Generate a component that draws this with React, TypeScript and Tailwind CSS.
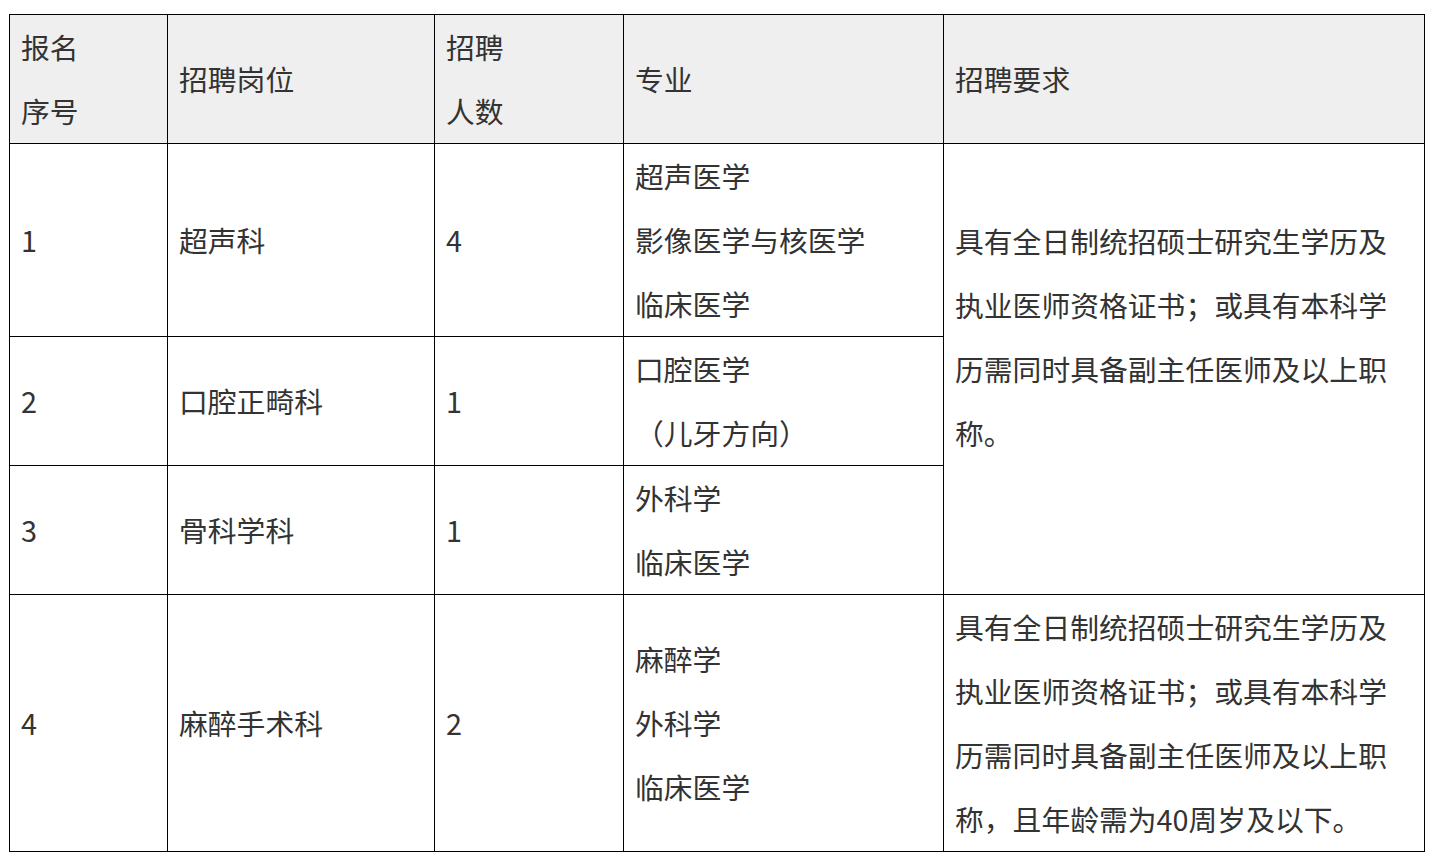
const font = {
  fontFamily: '"Noto Sans CJK SC", "Noto Sans", sans-serif',
};

type Row = {
  no: string;
  post: string;
  count: string;
  majors: string[];
};

const rows: Row[] = [
  { no: '1', post: '超声科', count: '4', majors: ['超声医学', '影像医学与核医学', '临床医学'] },
  { no: '2', post: '口腔正畸科', count: '1', majors: ['口腔医学', '（儿牙方向）'] },
  { no: '3', post: '骨科学科', count: '1', majors: ['外科学', '临床医学'] },
];

const req1 = ['具有全日制统招硕士研究生学历及', '执业医师资格证书；或具有本科学', '历需同时具备副主任医师及以上职', '称。'];
const req2 = ['具有全日制统招硕士研究生学历及', '执业医师资格证书；或具有本科学', '历需同时具备副主任医师及以上职', '称，且年龄需为40周岁及以下。'];

const cell = 'border border-[#000] pl-[11px] pr-3 py-0 align-middle text-left font-normal';

function Lines({ items }: { items: string[] }) {
  return (
    <>
      {items.map((t, i) => (
        <div key={i} className="whitespace-nowrap">
          {t}
        </div>
      ))}
    </>
  );
}

export default function App() {
  return (
    <div className="bg-white w-[1451px] h-[863px] pt-[14px] pl-[9px]" style={font}>
      <table className="table-fixed border-collapse w-[1415px] text-[28.8px] leading-[64px] text-[#333]">
        <colgroup>
          <col className="w-[158px]" />
          <col className="w-[267px]" />
          <col className="w-[189px]" />
          <col className="w-[320px]" />
          <col className="w-[481px]" />
        </colgroup>
        <thead>
          <tr className="bg-[#efefef] h-[129px]">
            <th className={cell}>
              <Lines items={['报名', '序号']} />
            </th>
            <th className={cell}>招聘岗位</th>
            <th className={cell}>
              <Lines items={['招聘', '人数']} />
            </th>
            <th className={cell}>专业</th>
            <th className={cell}>招聘要求</th>
          </tr>
        </thead>
        <tbody>
          {rows.map((r, i) => (
            <tr key={r.no}>
              <td className={cell}>{r.no}</td>
              <td className={cell}>{r.post}</td>
              <td className={cell}>{r.count}</td>
              <td className={cell}>
                <Lines items={r.majors} />
              </td>
              {i === 0 && (
                <td className={cell} rowSpan={3}>
                  <Lines items={req1} />
                  <div className="h-[64px]" />
                </td>
              )}
            </tr>
          ))}
          <tr>
            <td className={cell}>4</td>
            <td className={cell}>麻醉手术科</td>
            <td className={cell}>2</td>
            <td className={cell}>
              <Lines items={['麻醉学', '外科学', '临床医学']} />
            </td>
            <td className={cell}>
              <Lines items={req2} />
            </td>
          </tr>
        </tbody>
      </table>
    </div>
  );
}
